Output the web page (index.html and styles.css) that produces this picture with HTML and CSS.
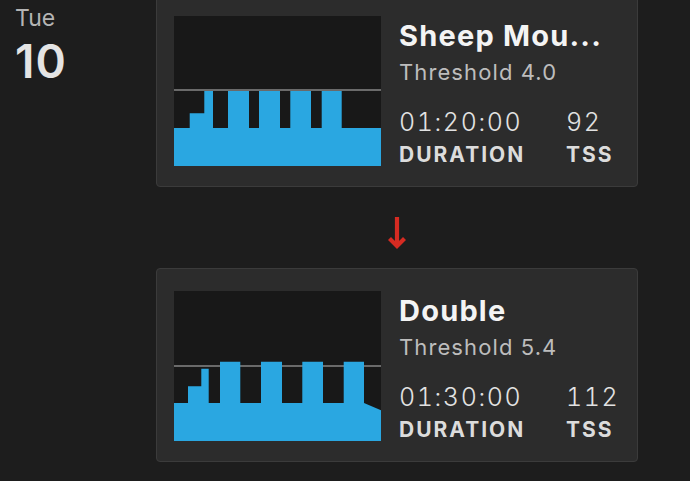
FILE: index.html
```html
<!DOCTYPE html>
<html lang="en">
<head>
<meta charset="utf-8">
<title>Workout swap</title>
<link rel="stylesheet" href="styles.css">
</head>
<body>
<div class="day">
  <div class="date">
    <div class="dow">Tue</div>
    <div class="dom">10</div>
  </div>
  <div class="swap">
    <div class="card card-first">
      <svg class="chart" width="207" height="150" viewBox="0 0 207 150">
        <rect x="0" y="0" width="207" height="150" fill="#181818"/>
        <rect x="0" y="73" width="207" height="2" fill="#6a6a6a"/>
        <path fill="#2aa7e1" d="M0 112 H15.7 V97.3 H30.3 V75 H39 V112 H54 V75 H75 V112 H85 V75 H106 V112 H116.3 V75 H137 V112 H147.7 V75 H167.7 V112 H207 V150 H0 Z"/>
      </svg>
      <div class="info">
        <div class="title">Sheep Mou...</div>
        <div class="sub">Threshold 4.0</div>
        <div class="stats">
          <div class="stat"><div class="val">01:20:00</div><div class="lbl">DURATION</div></div>
          <div class="stat"><div class="val">92</div><div class="lbl">TSS</div></div>
        </div>
      </div>
    </div>
    <div class="arrow">
      <svg width="20" height="34" viewBox="0 0 20 34">
        <path d="M10 1 V30 M2.5 22.5 L10 30 L17.5 22.5" fill="none" stroke="#d62b22" stroke-width="4.2" stroke-linecap="butt" stroke-linejoin="miter"/>
      </svg>
    </div>
    <div class="card">
      <svg class="chart" width="207" height="150" viewBox="0 0 207 150">
        <rect x="0" y="0" width="207" height="150" fill="#181818"/>
        <rect x="0" y="74" width="207" height="2" fill="#6a6a6a"/>
        <path fill="#2aa7e1" d="M0 112 H14 V95.3 H27.3 V77.7 H34.7 V112 H46 V70.7 H66.3 V112 H87 V70.7 H108 V112 H128.3 V70.7 H149 V112 H169.7 V70.7 H190 V112 L207 119.3 V150 H0 Z"/>
      </svg>
      <div class="info">
        <div class="title">Double</div>
        <div class="sub">Threshold 5.4</div>
        <div class="stats">
          <div class="stat"><div class="val">01:30:00</div><div class="lbl">DURATION</div></div>
          <div class="stat"><div class="val">112</div><div class="lbl">TSS</div></div>
        </div>
      </div>
    </div>
  </div>
</div>
</body>
</html>
```
FILE: styles.css
```css
html, body {
  margin: 0;
  padding: 0;
  background: #1d1d1d;
}
body {
  font-family: Inter, Lato, sans-serif;
  color: #e6e6e6;
  width: 690px;
  height: 481px;
  overflow: hidden;
}
.day {
  display: flex;
  align-items: flex-start;
}
.date {
  width: 140px;
  padding: 4px 0 0 15px;
  flex: none;
}
.dow {
  font-size: 23px;
  line-height: 28px;
  color: #b4b4b4;
}
.dom {
  font-size: 46px;
  line-height: 48px;
  font-weight: 600;
  color: #e4e4e4;
  margin-top: 5px;
  letter-spacing: 1px;
}
.swap {
  display: flex;
  flex-direction: column;
  width: 482px;
  margin-left: 1px;
}
.card {
  display: flex;
  box-sizing: border-box;
  height: 194px;
  padding: 22px 0 0 17px;
  background: #2c2c2c;
  border: 1px solid #3b3b3b;
  border-radius: 4px;
}
.card-first {
  margin-top: -7px;
}
.chart {
  display: block;
  flex: none;
}
.info {
  margin-left: 18px;
  margin-top: 2px;
}
.title {
  font-size: 29px;
  line-height: 36px;
  font-weight: 700;
  color: #f4f4f4;
  white-space: nowrap;
  letter-spacing: 1.2px;
}
.sub {
  font-size: 22px;
  line-height: 28px;
  color: #bdbdbd;
  margin-top: 4px;
  letter-spacing: 1.1px;
}
.stats {
  display: grid;
  grid-template-columns: 167px auto;
  margin-top: 21px;
}
.val {
  font-size: 25px;
  line-height: 30px;
  font-weight: 300;
  color: #e2e2e2;
  font-variant-numeric: tabular-nums;
  letter-spacing: 1.6px;
}
.lbl {
  font-size: 21px;
  line-height: 26px;
  font-weight: 700;
  color: #dcdcdc;
  margin-top: 5px;
  letter-spacing: 2px;
}
.arrow {
  display: flex;
  justify-content: center;
  padding-top: 29px;
  height: 58px;
  box-sizing: border-box;
  margin-bottom: 23px;
}
.arrow svg {
  display: block;
}
```
